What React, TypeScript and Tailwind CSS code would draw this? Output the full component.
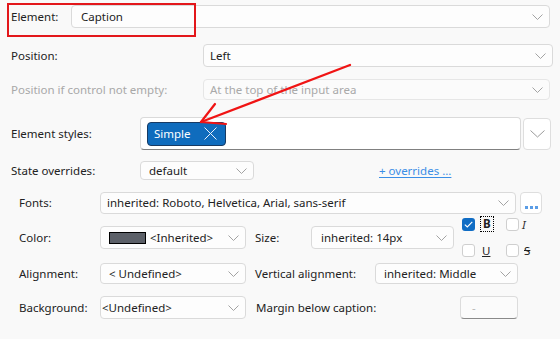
import React from "react"

const Chevron = ({ className = "" }: { className?: string }) => (
  <svg width="11" height="6" viewBox="0 0 11 6" className={className}>
    <path d="M0.5 0.5 L5.5 5.5 L10.5 0.5" fill="none" stroke="#a3a3a3" strokeWidth="1" />
  </svg>
)

type SelectProps = {
  text?: React.ReactNode
  className?: string
  textClassName?: string
  disabled?: boolean
}

const Select = ({ text, className = "", textClassName = "pl-[6px]", disabled }: SelectProps) => (
  <div
    className={`h-full flex items-center justify-between rounded-[4px] border ${
      disabled ? "border-[#e6e6e6] bg-[#fbfbfb] text-[#a9a9a9]" : "border-[#dadada] bg-[#fdfdfd] text-[#222]"
    } ${className}`}
  >
    <div className={`flex items-center whitespace-nowrap ${textClassName}`}>{text}</div>
    <Chevron className="mr-[6px] shrink-0" />
  </div>
)

const Box = ({ checked }: { checked?: boolean }) =>
  checked ? (
    <div className="shrink-0 w-[13px] h-[13px] rounded-[3px] bg-[#0f6cc4] flex items-center justify-center">
      <svg width="9" height="7" viewBox="0 0 9 7">
        <path d="M0.8 3.6 L3.3 6 L8.3 0.8" fill="none" stroke="#fff" strokeWidth="1.1" />
      </svg>
    </div>
  ) : (
    <div className="shrink-0 w-[13px] h-[13px] rounded-[3px] border border-[#cfcfcf] bg-white" />
  )

export default function App() {
  return (
    <div className="relative w-[560px] h-[339px] overflow-hidden bg-[#f9f9f9] font-['Noto_Sans',sans-serif] text-[11.5px] text-[#222]">
      <div className="flex flex-col">
        <div className="mt-[5px] h-[23px] flex items-center">
          <div className="w-[71px] pl-[11px]">Element:</div>
          <Select text="Caption" className="w-[479px]" textClassName="pl-[9px]" />
        </div>

        <div className="mt-[16px] h-[23px] flex items-center">
          <div className="w-[203px] pl-[11px]">Position:</div>
          <Select text="Left" className="w-[350px]" />
        </div>

        <div className="mt-[12px] h-[21px] flex items-center">
          <div className="w-[203px] pl-[11px] text-[#a8a8a8]">Position if control not empty:</div>
          <Select text="At the top of the input area" className="w-[347px]" disabled />
        </div>

        <div className="mt-[17px] h-[33px] flex items-center">
          <div className="w-[140px] pl-[11px]">Element styles:</div>
          <div className="w-[381px] h-full flex items-center pl-[6px] rounded-[4px] border border-[#dadada] border-b-[#808080] bg-white">
            <div className="h-[24px] w-[79px] flex items-center justify-between pl-[6px] pr-[8px] rounded-[4px] border border-[#173a63] bg-[#0f6cbd] text-white">
              <span>Simple</span>
              <svg width="13" height="13" viewBox="0 0 13 13">
                <path d="M0.5 0.5 L12.5 12.5 M12.5 0.5 L0.5 12.5" stroke="#e8f0fa" strokeWidth="1" />
              </svg>
            </div>
          </div>
          <div className="ml-[2px] w-[28px] h-[32px] flex items-center justify-center rounded-[4px] border border-[#dedede] bg-white">
            <svg width="15" height="8" viewBox="0 0 15 8">
              <path d="M0.5 0.5 L7.5 7 L14.5 0.5" fill="none" stroke="#9a9a9a" strokeWidth="1" />
            </svg>
          </div>
        </div>

        <div className="mt-[11px] h-[19px] flex items-center">
          <div className="w-[140px] pl-[11px]">State overrides:</div>
          <Select text="default" className="w-[114px]" textClassName="pl-[8px]" />
          <a className="ml-[125px] text-[#3b8ee6] underline underline-offset-2">+ overrides ...</a>
        </div>

        <div className="mt-[12px] h-[22px] flex items-center">
          <div className="w-[100px] pl-[19px]">Fonts:</div>
          <Select text="inherited: Roboto, Helvetica, Arial, sans-serif" className="w-[416px]" />
          <div className="ml-[4px] w-[22px] h-[22px] rounded-[4px] border border-[#dedede] bg-white flex items-end justify-center pb-[4px] gap-[2px]">
            <span className="w-[3px] h-[3px] bg-[#5b9de6]" />
            <span className="w-[3px] h-[3px] bg-[#5b9de6]" />
            <span className="w-[3px] h-[3px] bg-[#5b9de6]" />
          </div>
        </div>

        <div className="mt-[12px] h-[23px] flex items-center">
          <div className="w-[100px] pl-[19px]">Color:</div>
          <Select
            className="w-[146px]"
            textClassName="pl-[8px]"
            text={
              <>
                <span className="w-[37px] h-[12px] bg-[#5c6068] border border-black mr-[4px]" />
                <span>&lt;Inherited&gt;</span>
              </>
            }
          />
          <div className="ml-[9px] w-[56px]">Size:</div>
          <Select text="inherited: 14px" className="w-[143px]" textClassName="pl-[9px]" />
          <div className="ml-[8px] grid grid-cols-[44px_26px] gap-y-[9px]">
            <div className="flex items-center">
              <Box checked />
              <span className="ml-[5px] px-[2px] font-bold border border-dotted border-black leading-[14px]">B</span>
            </div>
            <div className="flex items-center">
              <Box />
              <span className="ml-[3px] italic text-[#333]">I</span>
            </div>
            <div className="flex items-center">
              <Box />
              <span className="ml-[7px] underline">U</span>
            </div>
            <div className="flex items-center">
              <Box />
              <span className="ml-[5px] line-through">S</span>
            </div>
          </div>
        </div>

        <div className="mt-[14px] h-[21px] flex items-center">
          <div className="w-[100px] pl-[19px]">Alignment:</div>
          <Select text="< Undefined>" className="w-[146px]" textClassName="pl-[8px]" />
          <div className="ml-[9px] w-[120px]">Vertical alignment:</div>
          <Select text="inherited: Middle" className="w-[143px]" textClassName="pl-[8px]" />
        </div>

        <div className="mt-[12px] h-[23px] flex items-center">
          <div className="w-[100px] pl-[19px]">Background:</div>
          <Select text="<Undefined>" className="w-[146px]" textClassName="pl-[1px]" />
          <div className="ml-[10px] w-[204px]">Margin below caption:</div>
          <div className="w-[58px] h-full flex items-center pl-[11px] rounded-[4px] border border-[#dcdcdc] border-b-[#8a8a8a] bg-[#fbfbfb] text-[#b8b8b8]">
            -
          </div>
        </div>
      </div>

      {/* annotations */}
      <div className="absolute left-[7px] top-[3px] w-[189px] h-[34px] border-2 border-[#e3171b]" />
      <svg className="absolute inset-0 pointer-events-none" width="560" height="339">
        <g stroke="#f01414" strokeWidth="2.2" strokeLinecap="round" fill="none">
          <path d="M350 65 L201 122" />
          <path d="M201 122 L215 104" />
          <path d="M201 122 L226 124" />
        </g>
      </svg>
    </div>
  )
}
